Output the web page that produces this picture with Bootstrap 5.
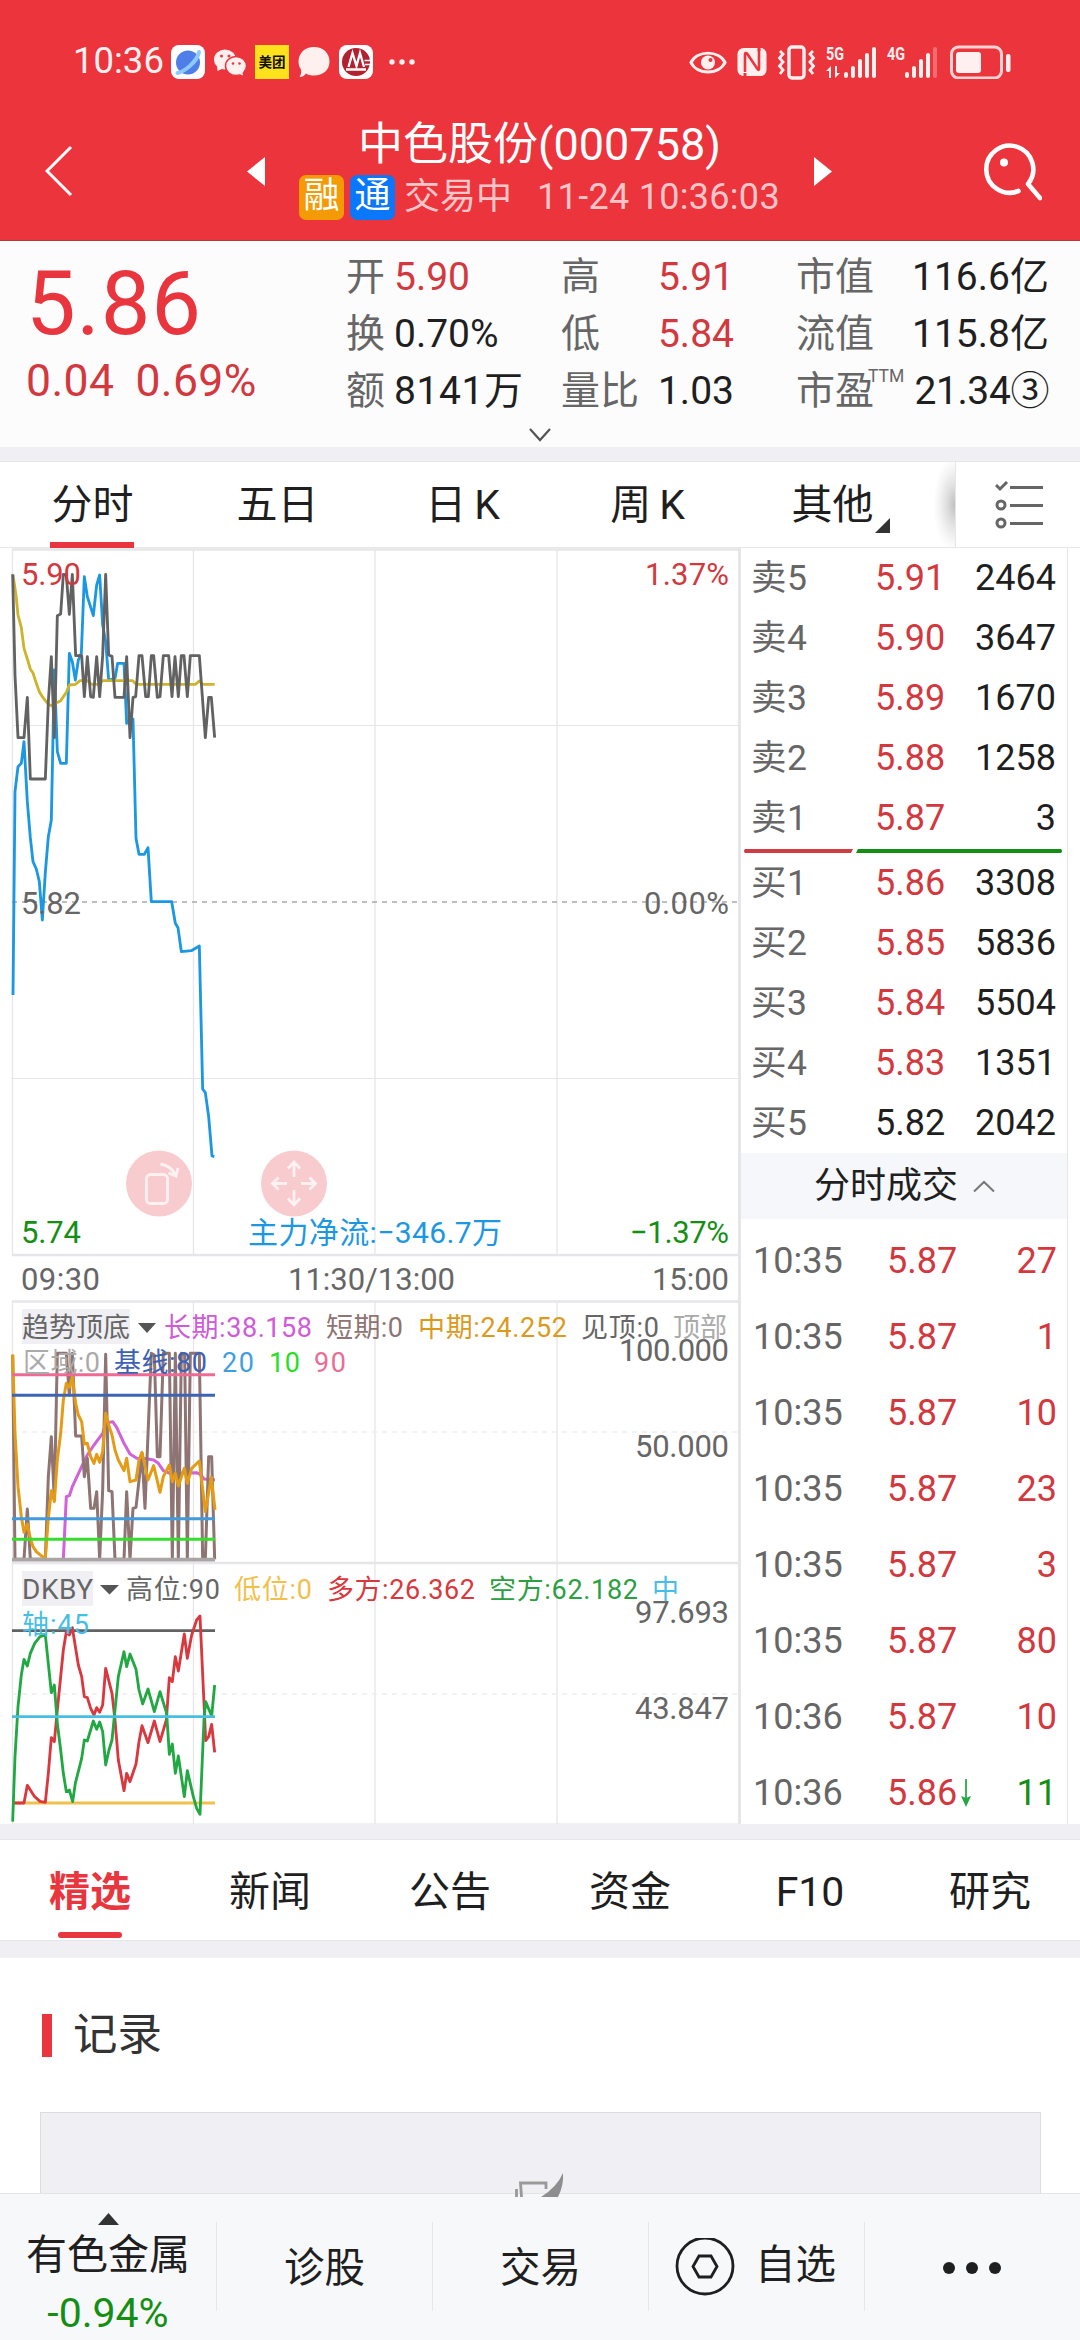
<!DOCTYPE html>
<html lang="zh-CN">
<head>
<meta charset="utf-8">
<meta name="viewport" content="width=device-width, initial-scale=1">
<title>中色股份(000758)</title>
<link href="https://cdn.jsdelivr.net/npm/bootstrap@5.3.0/dist/css/bootstrap.min.css" rel="stylesheet">
<style>
:root{--up:#e9353d;--rd:#d2383e;--dn:#148f14;--ink:#1f1f1f;--gy:#666;--ln:#e6e6ea;--band:#efeff4}
html,body{height:2340px;overflow:hidden}
body{width:1080px;background:#fff;color:var(--ink);font-family:Roboto,"Noto Sans CJK SC",sans-serif;font-size:39px;line-height:1}
svg{display:block;flex:none}
svg text{font-family:Roboto,"Noto Sans CJK SC",sans-serif}
.up{color:var(--rd)}.dn{color:var(--dn)}.gy{color:var(--gy)}
.app-head{height:241px;background:#eb343c;color:#fff;border-bottom:1px solid #b03a40}
.status{height:123px;padding:0 69px 0 73px}
.clock{font-size:36.5px;color:#fff0f0;width:98px}
.sig{font-size:18.5px;font-weight:700;fill:#fff0f0}
.meituan{width:34px;height:34px;background:#ffe11c;color:#111;font-size:13.5px;font-weight:700;line-height:34px}
.titlebar{height:117px;padding:0 38px 0 45px}
.stock-name{font-size:45px;height:52px;line-height:52px;margin-top:-4px;white-space:nowrap}
.stock-sub{height:46px;margin-top:3px;color:#ffc6ca;font-size:36px;white-space:nowrap}
.tag{width:45px;height:45px;border-radius:7px;font-size:36px;line-height:43px;color:#fff;text-align:center}
.quote{height:206px;background:#fcfcfd}
.big{font-size:88.5px;letter-spacing:.8px;color:var(--up);height:80px;line-height:80px;margin-left:26px;margin-top:23px}
.chg{font-size:44.5px;letter-spacing:.4px;height:50px;line-height:50px;margin:12px 0 0 26px;gap:21px}
.qcol{padding-top:8px}
.qrow{height:57px;line-height:57px;white-space:nowrap}
.ttm{position:absolute;left:72px;top:-15px;font-size:17.5px;color:var(--gy)}
.band{background:var(--band)}
.ktabs{height:87px;border-top:1px solid var(--ln);border-bottom:1px solid var(--ln);font-size:41px}
.ktab{width:185px;height:85px;line-height:87px;text-align:center;position:relative}
.ktab.active::after{content:"";position:absolute;left:50px;width:84px;height:6px;bottom:-1px;background:var(--up)}
.ktab svg{position:absolute;left:135px;top:56px}
.fade-edge{width:30px;background:radial-gradient(ellipse 22px 48px at 100% 50%,rgba(0,0,0,.25),rgba(0,0,0,.12) 40%,rgba(0,0,0,.04) 75%,rgba(0,0,0,0) 100%)}
.setbtn{width:125px;border-left:1px solid var(--ln)}
.main{height:1276px}
.charts{width:738px}
.side{width:330px;border-left:3px solid var(--ln);border-right:1px solid var(--ln);height:1276px;overflow:hidden;font-size:36px}
.bk{height:60px;line-height:61px;padding:0 11px 0 10px;white-space:nowrap}
.bk .nm{width:124px;font-size:35.5px;letter-spacing:.4px;color:var(--gy)}
.bk .pr{width:80px}
.duel{height:4px;margin:1px 4px 0 3px;gap:3px}
.dealhd{height:66px;line-height:66px;background:#f6f7fa;margin-left:-3px;padding-left:76px;gap:15px}
.deal{height:76px;line-height:76px;padding:0 10px 0 12px;white-space:nowrap}
.deal .tm{width:134px;color:var(--gy)}
.ntabs{height:102px;border-top:1px solid var(--ln);border-bottom:1px solid var(--ln);font-size:41px}
.ntab{width:180px;height:100px;line-height:104px;text-align:center;position:relative}
.ntab.active{color:var(--up);font-weight:700}
.ntab.active::after{content:"";position:absolute;left:58px;width:64px;height:6px;border-radius:3px;bottom:2px;background:var(--up)}
.rec{height:235px;padding-left:42px}
.rechd{padding-top:55px;font-size:44.5px;color:#333}
.recbar{width:10px;height:43px;background:var(--up);margin-right:21px}
.reccard{margin-top:54px;margin-left:-2px;width:1001px;height:84px;background:var(--band);border:1px solid #dcdcdf;padding:60px 0 0 474px}
.dock{height:147px;background:#f7f8fa;border-top:1px solid #e3e4e7;font-size:40.5px}
.dcell{width:216px;height:148px}
.dsep{width:1px;height:89px;background:#e6e8eb}
</style>
</head>
<body>
<header class="app-head">
  <div class="status d-flex align-items-center">
    <span class="clock">10:36</span>
    <svg width="34" height="34" viewBox="0 0 34 34"><rect width="34" height="34" rx="8" fill="#fff"/><circle cx="17" cy="17.500" r="12" fill="#4f7ee8"/><path d="M6.500 28C13 27 26 17 28 7" stroke="#8ccafb" stroke-width="4" fill="none" stroke-linecap="round"/></svg>
    <svg class="ms-2" width="34" height="34" viewBox="0 0 34 34"><g fill="#fff0f0"><ellipse cx="12" cy="14.500" rx="11" ry="10"/><path d="M4 20L4.500 26L11 23Z"/><ellipse cx="23" cy="21" rx="10.500" ry="9.500" stroke="#eb343c" stroke-width="1.500"/><path d="M24 28L30 30.500L29 25Z"/></g><g fill="#eb343c"><circle cx="8.500" cy="11" r="1.500"/><circle cx="16" cy="11" r="1.500"/><circle cx="20" cy="18.500" r="1.300"/><circle cx="26.500" cy="18.500" r="1.300"/></g></svg>
    <span class="meituan text-center ms-2">美团</span>
    <svg class="ms-2" width="34" height="34" viewBox="0 0 34 34"><path d="M17 2C26 2 32.500 8 32.500 16.500C32.500 25 26 30.500 17 30.500C14 30.500 11 30 9 28.500C7.500 31 5 32 2.500 32C4 30 4.500 27 4 24.500C2.500 22.500 1.500 19.500 1.500 16.500C1.500 8 8 2 17 2Z" fill="#fff0f0"/></svg>
    <svg class="ms-2" width="34" height="34" viewBox="0 0 34 34"><rect width="34" height="34" rx="8" fill="#fff"/><circle cx="17" cy="17" r="14" fill="#b3202f"/><path d="M9.500 22L13.500 8L17.500 21L21 8L25 22M7 24.500H27" fill="none" stroke="#fff" stroke-width="2.300"/><path d="M25.500 15.500H31M26 19.500H31" stroke="#fff" stroke-width="1.500"/></svg>
    <svg class="ms-3" style="margin-right:0" width="26" height="8" viewBox="2 0 26 8"><g fill="#fff0f0"><circle cx="5" cy="4" r="2.700"/><circle cx="15" cy="4" r="2.700"/><circle cx="25" cy="4" r="2.700"/></g></svg>
    <svg class="ms-auto" width="38" height="34" viewBox="0 0 38 34"><path d="M2 17.500C8 3.500 30 3.500 36 17.500C30 31.500 8 31.500 2 17.500Z" fill="none" stroke="#fff0f0" stroke-width="3.200" transform="translate(0 1.800) scale(1 .9)"/><circle cx="19" cy="17.500" r="7" fill="#fff0f0"/><circle cx="21.500" cy="15" r="2" fill="#eb343c"/></svg>
    <svg style="margin-left:10px" width="30" height="34" viewBox="0 0 30 34"><rect x="0.500" y="3" width="29" height="28" rx="6" fill="#fff0f0"/><path d="M8 27V9.500Q8 7 10 8.500L20.500 24Q22 26 22 23.500V4" fill="none" stroke="#eb343c" stroke-width="2.600"/><path d="M8 31V28M22 3V6" stroke="#eb343c" stroke-width="3"/></svg>
    <svg style="margin-left:10px" width="40" height="36" viewBox="0 0 40 36"><g fill="none" stroke="#fff0f0"><rect x="12" y="3" width="15" height="31" rx="3" stroke-width="3.400"/><path d="M3 7L6 10L2.500 14L6 18L2.500 22L6 26L3 30M36 7L33 10L36.500 14L33 18L36.500 22L33 26L36 30" stroke-width="2.800"/></g></svg>
    <svg style="margin-left:8px" width="53" height="40" viewBox="-1 -3 53 40"><text class="sig" x="0" y="15" textLength="18" lengthAdjust="spacingAndGlyphs">5G</text><g fill="#fff0f0"><path d="M0 26L5 21V33H3V26ZM9 21V33L14 28H11V21Z"/><rect x="18" y="27" width="4" height="6" rx="2"/><rect x="25" y="21" width="4" height="12" rx="2"/><rect x="32" y="14" width="4" height="19" rx="2"/><rect x="39" y="8" width="4" height="25" rx="2"/><rect x="46" y="2" width="4" height="31" rx="2"/></g></svg>
    <svg style="margin-left:8px" width="53" height="40" viewBox="-1 -3 53 40"><text class="sig" x="0" y="15" textLength="18" lengthAdjust="spacingAndGlyphs">4G</text><g fill="#fff0f0"><rect x="18" y="27" width="4" height="6" rx="2"/><rect x="25" y="21" width="4" height="12" rx="2"/><rect x="32" y="14" width="4" height="19" rx="2"/><rect x="39" y="8" width="4" height="25" rx="2"/><rect x="46" y="2" width="4" height="31" rx="2" opacity=".3"/></g></svg>
    <svg style="margin-left:11px" width="61" height="34" viewBox="0 0 61 34"><rect x="1.500" y="2" width="50" height="31" rx="7" fill="none" stroke="#fbd3d5" stroke-width="3"/><rect x="6" y="7" width="25" height="21" rx="3" fill="#fff0f0"/><rect x="56" y="9" width="4.500" height="18" rx="2" fill="#fff0f0"/></svg>
  </div>
  <div class="titlebar d-flex align-items-start">
    <svg style="margin-top:22px" width="28" height="52" viewBox="0 0 28 52"><path d="M26 2L2 26L26 50" fill="none" stroke="#fff" stroke-width="3"/></svg>
    <svg style="margin:34px 0 0 174px" width="18" height="29" viewBox="0 0 18 29"><path d="M18 0V29L0 14.500Z" fill="#fff"/></svg>
    <div class="d-flex flex-column align-items-center" style="width:549px">
      <div class="stock-name">中色股份(000758)</div>
      <div class="stock-sub d-flex align-items-center"><span class="tag" style="background:#f39a05">融</span><span class="tag" style="background:#0b77fb;margin:0 9px 0 6px">通</span><span>交易中</span><span style="margin-left:25px;letter-spacing:.3px">11-24 10:36:03</span></div>
    </div>
    <svg style="margin-top:34px" width="18" height="29" viewBox="0 0 18 29"><path d="M0 0V29L18 14.500Z" fill="#fff"/></svg>
    <svg class="ms-auto" style="margin-top:17px" width="60" height="62" viewBox="0 0 60 62"><path d="M36.500 52A23.500 23.500 0 1 1 46 45L58 59" transform="translate(0 -1)" fill="none" stroke="#fff" stroke-width="4.600" stroke-linecap="round" stroke-linejoin="round"/><circle cx="22" cy="22.500" r="4" fill="#fff"/></svg>
  </div>
</header>

<section class="quote d-flex position-relative">
  <div style="width:346px">
    <div class="big">5.86</div>
    <div class="chg up d-flex"><span>0.04</span><span>0.69%</span></div>
  </div>
  <div class="qcol" style="width:215px">
    <div class="qrow d-flex"><span class="gy" style="width:48px">开</span><span class="up">5.90</span></div>
    <div class="qrow d-flex"><span class="gy" style="width:48px">换</span><span>0.70%</span></div>
    <div class="qrow d-flex"><span class="gy" style="width:48px">额</span><span style="letter-spacing:.6px">8141万</span></div>
  </div>
  <div class="qcol" style="width:173px">
    <div class="qrow d-flex justify-content-between"><span class="gy">高</span><span class="up">5.91</span></div>
    <div class="qrow d-flex justify-content-between"><span class="gy">低</span><span class="up">5.84</span></div>
    <div class="qrow d-flex justify-content-between"><span class="gy">量比</span><span>1.03</span></div>
  </div>
  <div class="qcol" style="width:253px;margin-left:62px">
    <div class="qrow d-flex justify-content-between"><span class="gy">市值</span><span>116.6亿</span></div>
    <div class="qrow d-flex justify-content-between"><span class="gy">流值</span><span>115.8亿</span></div>
    <div class="qrow d-flex justify-content-between position-relative"><span class="gy">市盈</span><span class="ttm">TTM</span><span style="letter-spacing:-.4px">21.34③</span></div>
  </div>
  <svg class="position-absolute bottom-0 start-50 translate-middle-x" width="24" height="20" viewBox="0 0 24 20"><path d="M2 2L12 13L22 2" fill="none" stroke="#555" stroke-width="2.200"/></svg>
</section>
<div class="band" style="height:14px"></div>

<nav class="ktabs d-flex">
  <div class="ktab active">分时</div><div class="ktab">五日</div><div class="ktab">日<span class="ms-2">K</span></div><div class="ktab">周<span class="ms-2">K</span></div>
  <div class="ktab">其他<svg width="15" height="15"><path d="M15 0V15H0Z" fill="#333"/></svg></div>
  <div class="fade-edge"></div>
  <div class="setbtn d-flex align-items-center"><svg style="margin-left:39px" width="50" height="50" viewBox="0 0 50 50"><g fill="none" stroke="#666" stroke-width="3"><path d="M15 7.500H48M15 25.500H48M15 43.500H48M1 5L5 9L12 2"/><circle cx="6" cy="25" r="4"/><circle cx="6" cy="43" r="4"/></g></svg></div>
</nav>

<main class="main d-flex">
  <div class="charts">
    <svg width="738" height="1276" viewBox="0 548 738 1276">
      <g fill="none" stroke="#e6e6ea">
        <path d="M12 549.500H738M12 1255H738M12 1301.500H738M12 1563H738" stroke-width="2.500"/>
        <path d="M12 725.500H738M12 1078.500H738M12 1824H738" stroke-width="1.200"/>
        <path d="M12.500 549V1255M193.500 549V1255M375 549V1255M557 549V1255M12.500 1301V1824M193.500 1301V1824M375 1301V1824M557 1301V1824" stroke-width="1.300"/>
        <path d="M12 1432H738M12 1694H738" stroke="#eee" stroke-width="1.600" stroke-dasharray="5 5"/>
        <path d="M12 902H738" stroke="#aaa" stroke-width="1.700" stroke-dasharray="5 5"/>
      </g>
      <g transform="translate(0 545) scale(.33333)" fill="none" stroke-width="8.500" stroke-linejoin="round">
        <polyline stroke="#1c98e2" points="39,1350 45,740 54,665 64,655 72,590 82,770 91,878 99,950 109,972 118,1010 127,1125 136,982 145,875 154,825 163,375 172,620 182,655 199,655 208,325 217,350 226,405 235,345 244,325 253,95 262,155 280,212 290,120 299,90 308,240 317,290 326,405 345,400 353,355 372,355 380,535 399,522 408,880 417,928 433,928 444,908 454,1070 515,1070 526,1135 534,1148 544,1220 574,1217 598,1203 608,1632 616,1643 626,1715 636,1833 643,1835"/>
        <polyline stroke="#ceb42c" points="39,90 48,150 54,210 64,248 72,310 82,342 91,372 99,384 109,415 118,440 127,455 136,467 145,478 154,482 163,477 182,467 199,442 208,420 226,418 240,407 262,407 275,418 299,418 308,407 398,407 408,418 586,418 598,408 608,418 644,418"/>
        <polyline stroke="#626262" points="38,88 45,390 54,578 72,578 82,457 91,702 136,702 145,470 154,335 163,578 172,212 182,207 190,88 199,90 208,208 217,88 227,332 245,332 253,455 262,335 272,455 280,457 290,335 299,455 308,332 317,88 326,330 336,334 345,457 372,457 380,335 390,578 399,457 407,455 417,332 426,332 437,455 445,455 454,332 461,332 472,457 480,455 490,332 506,332 516,455 525,335 535,455 544,332 552,332 562,455 571,332 598,332 616,578 626,457 634,457 644,578"/>
      </g>
      <g transform="translate(0 1300) scale(.33333)" fill="none" stroke-width="9" stroke-linejoin="round">
        <polyline stroke="#d062da" points="190,778 199,590 208,587 217,560 245,500 262,465 282,435 308,400 317,370 338,365 350,382 372,430 390,462 410,475 440,476 461,480 475,490 490,512 510,520 590,518 600,522 612,537 645,540"/>
        <polyline stroke="#8e7472" points="38,165 45,778 72,778 82,627 91,778 136,778 145,530 154,410 163,600 172,160 199,160 208,285 217,160 227,408 245,408 253,530 262,475 272,625 282,625 290,575 299,778 308,570 317,163 326,572 336,575 345,778 372,778 380,575 390,778 399,625 408,622 426,460 435,625 454,160 463,165 472,470 480,470 490,160 508,160 517,778 526,160 535,778 544,160 554,165 562,778 571,160 598,160 608,778 616,778 626,470 635,470 644,778"/>
        <polyline stroke="#e49c16" points="38,163 45,400 54,560 64,650 72,697 82,672 91,715 99,740 109,755 127,770 136,773 145,655 154,572 163,605 172,480 182,400 190,300 199,250 208,262 217,230 227,310 235,345 245,365 253,432 262,430 272,470 282,490 290,463 299,487 308,455 317,340 326,375 336,405 345,450 355,480 372,512 380,475 390,545 408,540 417,480 426,457 444,540 461,497 480,577 490,530 508,495 517,545 526,520 535,558 553,505 562,550 575,505 598,483 616,635 634,532 645,630"/>
        <path d="M36 224H645" stroke="#ee6a94"/><path d="M36 286H645" stroke="#3d64b4"/><path d="M36 656H645" stroke="#409adb"/><path d="M36 718H645" stroke="#35de2c"/><path d="M36 779H645" stroke="#aaa5a5" stroke-width="11"/>
      </g>
      <g transform="translate(0 1560) scale(.33333)" fill="none" stroke-width="8.500" stroke-linejoin="round">
        <path d="M36 212H645" stroke="#626262"/><path d="M36 729H645" stroke="#f1c04c"/>
        <polyline stroke="#d8383e" points="38,729 72,729 82,676 91,690 104,710 120,724 136,727 145,640 154,533 163,545 172,450 190,270 199,215 208,225 217,203 235,315 245,350 253,410 262,413 272,445 282,465 290,443 299,457 308,435 317,325 336,400 345,480 355,600 372,692 380,640 390,665 408,612 417,545 426,497 444,548 463,483 480,545 499,480 508,353 517,365 526,290 535,333 553,222 562,295 575,225 590,180 600,168 612,430 617,542 626,530 635,493 644,577"/>
        <polyline stroke="#22a843" points="38,785 45,590 54,440 64,345 72,298 82,318 91,280 104,250 120,230 136,225 154,398 163,375 172,490 182,570 190,640 199,695 208,690 218,725 226,670 245,595 253,540 262,543 280,483 290,508 299,486 308,515 317,615 327,570 336,540 345,450 355,350 372,275 380,320 390,282 408,328 417,390 428,432 444,387 463,455 480,395 500,460 508,583 517,552 526,640 535,588 553,710 562,632 580,710 590,745 600,763 612,480 617,425 635,468 644,375"/>
        <path d="M36 470H645" stroke="#48bfe2"/>
      </g>
      <g fill="#f8cccf"><circle cx="159" cy="1183.500" r="33"/><circle cx="294" cy="1183.500" r="33"/></g>
      <g fill="none" stroke="#fdf1f1" stroke-width="2.800">
        <rect x="146.500" y="1174.500" width="21" height="29" rx="4"/><path d="M160.500 1164Q171 1166 175 1174M168.500 1173L176 1176L178 1168"/>
        <path d="M294 1177V1162.500M288 1168.500L294 1162L300 1168.500M294 1190V1204.500M288 1198.500L294 1205L300 1198.500M287 1183.500H273M278.500 1177.500L272.500 1183.500L278.500 1189.500M301 1183.500H315M309.500 1177.500L315.500 1183.500L309.500 1189.500"/>
      </g>
      <g font-size="31" fill="#666">
        <text x="21" y="585" fill="#d2383e" textLength="60">5.90</text><text x="729" y="585" fill="#d2383e" text-anchor="end" textLength="84">1.37%</text>
        <text x="21" y="914" textLength="60">5.82</text><text x="729" y="914" text-anchor="end" textLength="85">0.00%</text>
        <text x="21" y="1243" fill="#148f14" textLength="60">5.74</text><text x="729" y="1243" fill="#148f14" text-anchor="end" textLength="99">−1.37%</text>
        <text x="248" y="1243" fill="#1c98e2" font-size="30" textLength="254">主力净流:−346.7万</text>
        <text x="21" y="1290" textLength="79">09:30</text><text x="288" y="1290" textLength="167">11:30/13:00</text><text x="729" y="1290" text-anchor="end" textLength="77">15:00</text>
        <text x="729" y="1361" text-anchor="end" textLength="110">100.000</text><text x="729" y="1457" text-anchor="end" textLength="94">50.000</text>
        <text x="729" y="1623" text-anchor="end" textLength="94">97.693</text><text x="729" y="1719" text-anchor="end" textLength="94">43.847</text>
      </g>
      <g font-size="27">
        <path d="M22 1309H130V1344H22ZM22 1571H93V1606H22Z" fill="#efeff4"/><path d="M138 1323H156L147 1333ZM100 1585H119L109.500 1594.500Z" fill="#555"/>
        <g fill="#666"><text x="22" y="1336.500">趋势顶底</text><text x="581" y="1336.500" textLength="78">见顶:0</text><text x="22" y="1599" font-size="28" textLength="71">DKBY</text><text x="126" y="1599" textLength="94">高位:90</text></g>
        <text x="164" y="1336.500" fill="#cf5bd8" textLength="148">长期:38.158</text><text x="326" y="1336.500" fill="#8e7472" textLength="77">短期:0</text><text x="418" y="1336.500" fill="#dc9a1c" textLength="149">中期:24.252</text>
        <g fill="#aaa"><text x="673" y="1336.500" textLength="54">顶部</text><text x="23" y="1372" textLength="77">区域:0</text></g>
        <text x="114" y="1372" fill="#3d62b5" textLength="93">基线:80</text><text x="222" y="1372" fill="#3f9fde" textLength="32">20</text><text x="269" y="1372" fill="#28df24" textLength="31">10</text><text x="314" y="1372" fill="#ea6c94" textLength="32">90</text>
        <text x="234" y="1599" fill="#f1c04c" textLength="78">低位:0</text><text x="327" y="1599" fill="#d8383e" textLength="148">多方:26.362</text><text x="489" y="1599" fill="#2ba042" textLength="149">空方:62.182</text>
        <g fill="#45bfe6"><text x="652" y="1599">中</text><text x="22" y="1634" textLength="67">轴:45</text></g>
      </g>
    </svg>
  </div>
  <aside class="side">
    <div class="bk d-flex"><span class="nm">卖5</span><span class="pr up">5.91</span><span class="ms-auto">2464</span></div>
    <div class="bk d-flex"><span class="nm">卖4</span><span class="pr up">5.90</span><span class="ms-auto">3647</span></div>
    <div class="bk d-flex"><span class="nm">卖3</span><span class="pr up">5.89</span><span class="ms-auto">1670</span></div>
    <div class="bk d-flex"><span class="nm">卖2</span><span class="pr up">5.88</span><span class="ms-auto">1258</span></div>
    <div class="bk d-flex"><span class="nm">卖1</span><span class="pr up">5.87</span><span class="ms-auto">3</span></div>
    <div class="duel d-flex"><svg width="109" height="4"><path d="M1 0H109L107 4H1Q-1 2 1 0Z" fill="#cf3c43"/></svg><svg width="206" height="4"><path d="M2 0H205Q207 2 205 4H0Z" fill="#148f14"/></svg></div>
    <div class="bk d-flex"><span class="nm">买1</span><span class="pr up">5.86</span><span class="ms-auto">3308</span></div>
    <div class="bk d-flex"><span class="nm">买2</span><span class="pr up">5.85</span><span class="ms-auto">5836</span></div>
    <div class="bk d-flex"><span class="nm">买3</span><span class="pr up">5.84</span><span class="ms-auto">5504</span></div>
    <div class="bk d-flex"><span class="nm">买4</span><span class="pr up">5.83</span><span class="ms-auto">1351</span></div>
    <div class="bk d-flex"><span class="nm">买5</span><span class="pr">5.82</span><span class="ms-auto">2042</span></div>
    <div class="dealhd d-flex align-items-center"><span>分时成交</span><svg width="22" height="13" viewBox="0 0 22 13"><path d="M1 11.500L11 2L21 11.500" fill="none" stroke="#777" stroke-width="2"/></svg></div>
    <div class="deal d-flex mt-1"><span class="tm">10:35</span><span class="up">5.87</span><span class="ms-auto up">27</span></div>
    <div class="deal d-flex"><span class="tm">10:35</span><span class="up">5.87</span><span class="ms-auto up">1</span></div>
    <div class="deal d-flex"><span class="tm">10:35</span><span class="up">5.87</span><span class="ms-auto up">10</span></div>
    <div class="deal d-flex"><span class="tm">10:35</span><span class="up">5.87</span><span class="ms-auto up">23</span></div>
    <div class="deal d-flex"><span class="tm">10:35</span><span class="up">5.87</span><span class="ms-auto up">3</span></div>
    <div class="deal d-flex"><span class="tm">10:35</span><span class="up">5.87</span><span class="ms-auto up">80</span></div>
    <div class="deal d-flex"><span class="tm">10:36</span><span class="up">5.87</span><span class="ms-auto up">10</span></div>
    <div class="deal d-flex"><span class="tm">10:36</span><span class="up">5.86</span><svg class="align-self-center ms-1" width="10" height="28" viewBox="0 0 10 28"><path d="M5 0V20" stroke="#3cb25c" stroke-width="2"/><path d="M0 17L5 19L10 17L5 28Z" fill="#22a843"/></svg><span class="ms-auto dn">11</span></div>
  </aside>
</main>

<div class="band" style="height:15px"></div>
<nav class="ntabs d-flex">
  <div class="ntab active">精选</div><div class="ntab">新闻</div><div class="ntab">公告</div><div class="ntab">资金</div><div class="ntab">F10</div><div class="ntab">研究</div>
</nav>
<div class="band" style="height:17px"></div>
<section class="rec">
  <div class="rechd d-flex align-items-center"><span class="recbar"></span><span>记录</span></div>
  <div class="reccard"><svg width="50" height="24" viewBox="0 0 50 24"><path d="M6.500 24L5.500 10H31V16M1.500 24V16" fill="none" stroke="#999" stroke-width="2.800"/><path d="M48 0Q49 12 43 24H26Q42 14 48 0Z" fill="#8e8e8e"/></svg></div>
</section>

<footer class="dock d-flex align-items-start">
  <div class="dcell d-flex flex-column align-items-center"><svg style="margin-top:19px" width="21" height="12"><path d="M10.500 0L21 12H0Z" fill="#333"/></svg><span style="line-height:56px;margin-top:2px;font-size:41px">有色金属</span><span class="dn" style="line-height:60px;font-size:41px">-0.94%</span></div>
  <div class="dsep" style="margin-top:28px"></div>
  <div class="dcell d-flex align-items-center justify-content-center" style="width:215px">诊股</div>
  <div class="dsep" style="margin-top:28px"></div>
  <div class="dcell d-flex align-items-center justify-content-center" style="width:215px">交易</div>
  <div class="dsep" style="margin-top:28px"></div>
  <div class="dcell d-flex align-items-center" style="width:215px"><svg style="margin-left:26px" width="60" height="60" viewBox="0 0 60 60"><g fill="none" stroke="#1f1f1f" stroke-width="2.800"><circle cx="30" cy="28" r="28"/><path d="M24 18H36L42 28.500L36 39H24L18 28.500Z"/></g></svg><span style="margin-left:20px;margin-top:-6px">自选</span></div>
  <div class="dsep" style="margin-top:28px"></div>
  <div class="dcell d-flex align-items-center justify-content-center" style="width:214px"><svg width="58" height="12" viewBox="0 0 58 12"><g fill="#1f1f1f"><circle cx="6" cy="6" r="6"/><circle cx="29" cy="6" r="6"/><circle cx="52" cy="6" r="6"/></g></svg></div>
</footer>
<script src="https://cdn.jsdelivr.net/npm/bootstrap@5.3.0/dist/js/bootstrap.bundle.min.js"></script>
</body>
</html>
